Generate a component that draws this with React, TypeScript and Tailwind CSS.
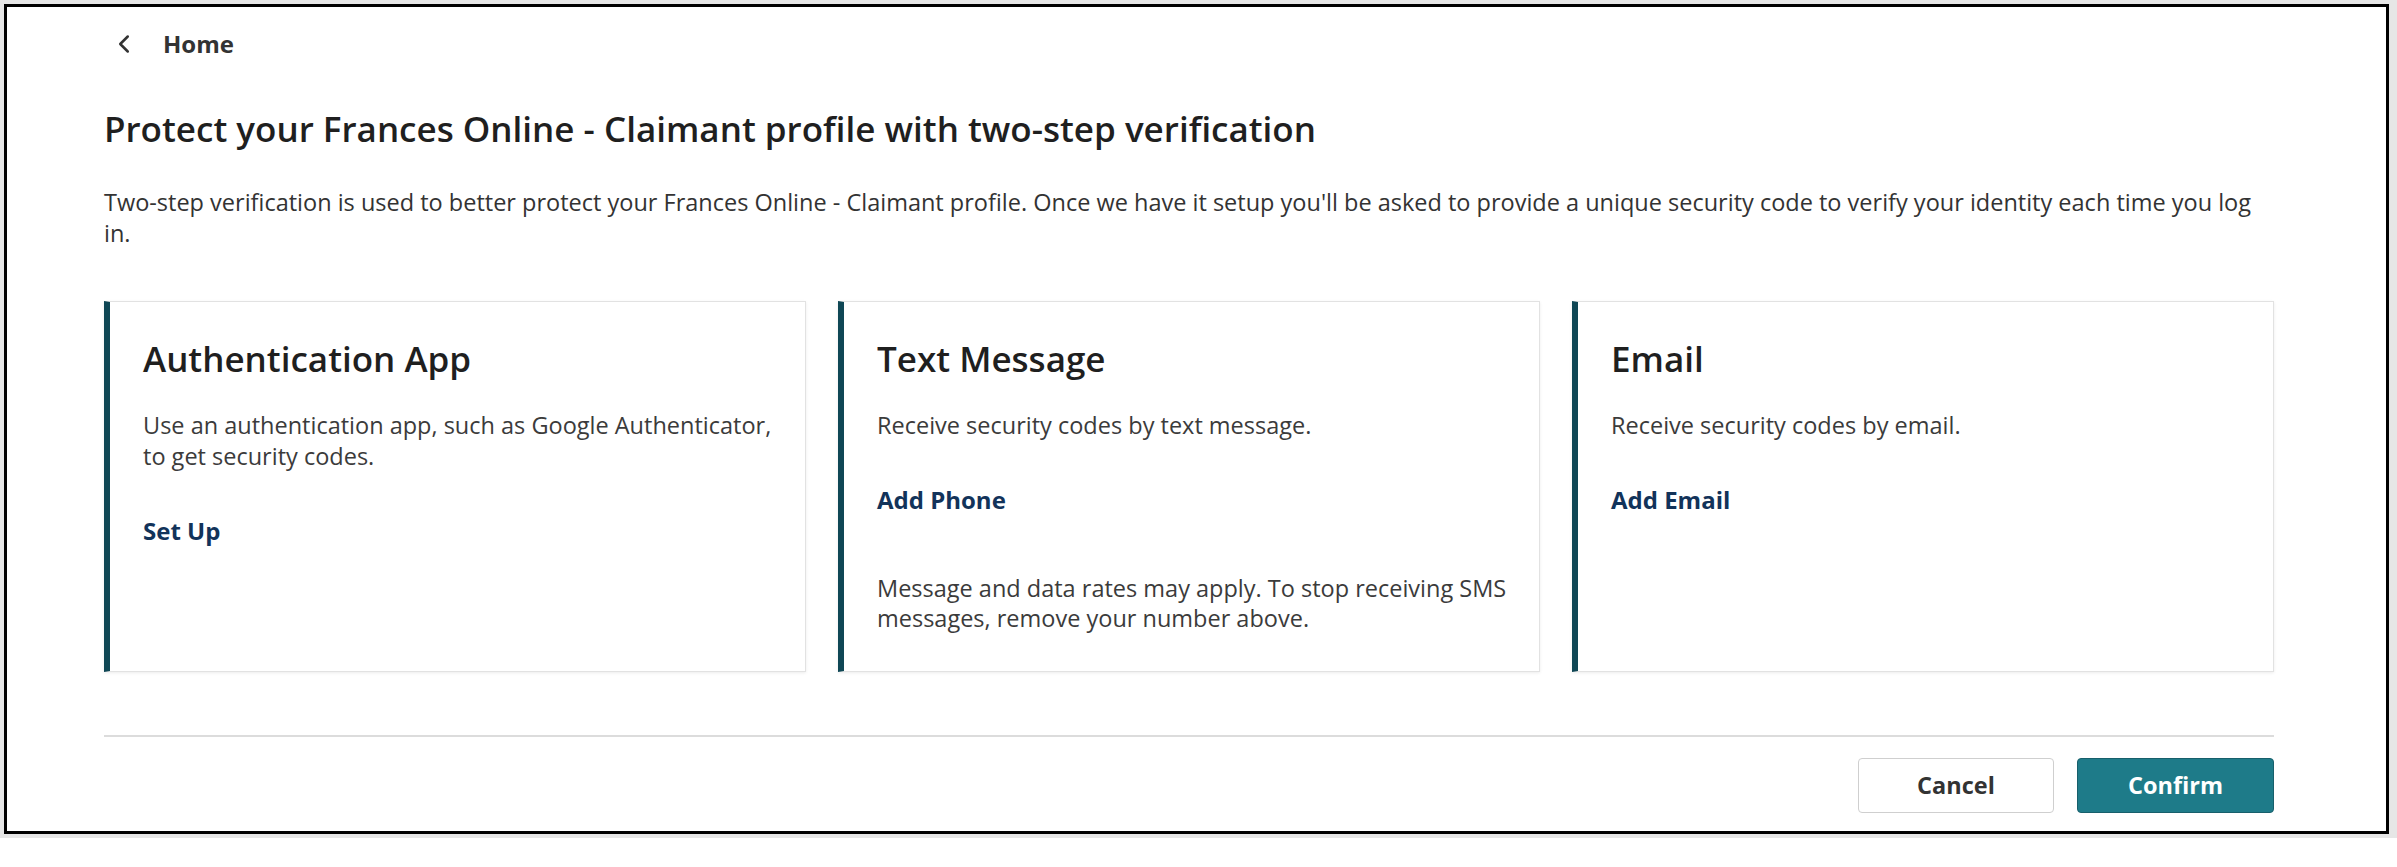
import { ChevronLeft } from "lucide-react";

type Method = {
  title: string;
  description: string;
  action: string;
  note?: string;
};

const methods: Method[] = [
  {
    title: "Authentication App",
    description:
      "Use an authentication app, such as Google Authenticator, to get security codes.",
    action: "Set Up",
  },
  {
    title: "Text Message",
    description: "Receive security codes by text message.",
    action: "Add Phone",
    note: "Message and data rates may apply. To stop receiving SMS messages, remove your number above.",
  },
  {
    title: "Email",
    description: "Receive security codes by email.",
    action: "Add Email",
  },
];

const MethodCard = ({ title, description, action, note }: Method) => (
  <div className="flex flex-col border border-[#e2e2e2] border-l-[6px] border-l-[#0f4755] bg-white pl-[33px] pr-[16px] pt-[36px] pb-[38px] shadow-[0_1px_3px_rgba(0,0,0,0.08)]">
    <h2 className="text-[35px] font-semibold leading-[42px] text-[#1f1f1f]">
      {title}
    </h2>
    <p className="mt-[30px] text-[23.5px] leading-[31px] text-[#3b3b3b]">
      {description}
    </p>
    <a
      href="#"
      className="mt-[43px] text-[24px] font-bold leading-[31px] text-[#12335a]"
    >
      {action}
    </a>
    {note && (
      <p className="mt-[58px] text-[23.5px] leading-[30px] text-[#3b3b3b]">
        {note}
      </p>
    )}
  </div>
);

export default function App() {
  return (
    <div
      className="h-[867px] w-[2397px] bg-white"
      style={{ fontFamily: '"Open Sans", "Noto Sans", sans-serif' }}
    >
      <div className="h-[838px] bg-[#e6e6e6] pl-[4px] pr-[8px] pt-[4px] pb-[4px]">
        <div className="flex h-full flex-col border-[3px] border-black bg-white pl-[97px] pr-[112px] pt-[22px] pb-[17px]">
          <a
            href="#"
            className="flex items-center gap-[24px] text-[24px] font-bold leading-[28px] text-[#333]"
          >
            <ChevronLeft className="ml-[5px] h-[30px] w-[30px]" strokeWidth={2} />
            Home
          </a>

          <h1 className="mt-[50px] text-[35px] font-semibold leading-[40px] text-[#1f1f1f]">
            Protect your Frances Online - Claimant profile with two-step
            verification
          </h1>

          <p className="mt-[38px] text-[23.5px] leading-[31px] text-[#333]">
            Two-step verification is used to better protect your Frances Online
            - Claimant profile. Once we have it setup you'll be asked to provide
            a unique security code to verify your identity each time you log
            in.
          </p>

          <div className="mt-[52px] grid grid-cols-3 gap-[32px]">
            {methods.map((m) => (
              <MethodCard key={m.title} {...m} />
            ))}
          </div>

          <div className="mt-[63px] h-[2px] shrink-0 bg-[#dcdcdc]" />

          <div className="mt-[21px] flex shrink-0 justify-end gap-[23px]">
            <button
              type="button"
              className="h-[55px] w-[196px] rounded-[4px] border border-[#cfcfcf] bg-white text-[23.5px] font-bold text-[#333]"
            >
              Cancel
            </button>
            <button
              type="button"
              className="h-[55px] w-[197px] rounded-[4px] border border-[#175f6b] bg-[#1e7b89] text-[23.5px] font-bold text-white"
            >
              Confirm
            </button>
          </div>
        </div>
      </div>
    </div>
  );
}
